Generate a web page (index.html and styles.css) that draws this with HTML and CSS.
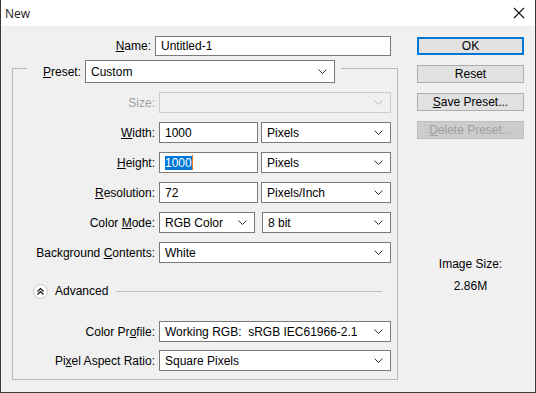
FILE: index.html
```html
<!DOCTYPE html>
<html lang="en">
<head>
    <meta charset="UTF-8">
    <title>New</title>
    <link rel="stylesheet" href="styles.css">
</head>
<body>
    <div class="window">
        <div class="titlebar">
            <span class="title">New</span>
            <svg class="close" width="12" height="12" viewBox="0 0 12 12">
                <path d="M1 1L11 11M11 1L1 11" stroke="#111" stroke-width="1.1" fill="none"/>
            </svg>
        </div>

        <div class="content">
            <div class="left">
                <div class="name-row">
                    <label class="name-label"><u>N</u>ame:</label>
                    <div class="field name-field">Untitled-1</div>
                </div>

                <div class="group">
                    <div class="group-head">
                        <label class="preset-label"><u>P</u>reset:</label>
                        <div class="field select preset-select">
                            <span>Custom</span>
                            <svg class="chev" width="9" height="5" viewBox="0 0 9 5"><polyline points="0.5,0.5 4.5,4.5 8.5,0.5" fill="none" stroke="#333"/></svg>
                        </div>
                    </div>

                    <div class="row first">
                        <label class="row-label disabled">Size:</label>
                        <div class="field select wide off">
                            <span></span>
                            <svg class="chev" width="9" height="5" viewBox="0 0 9 5"><polyline points="0.5,0.5 4.5,4.5 8.5,0.5" fill="none" stroke="#b5b5b5"/></svg>
                        </div>
                    </div>

                    <div class="row">
                        <label class="row-label"><u>W</u>idth:</label>
                        <div class="pair">
                            <div class="field num">1000</div>
                            <div class="field select unit">
                                <span>Pixels</span>
                                <svg class="chev" width="9" height="5" viewBox="0 0 9 5"><polyline points="0.5,0.5 4.5,4.5 8.5,0.5" fill="none" stroke="#333"/></svg>
                            </div>
                        </div>
                    </div>

                    <div class="row">
                        <label class="row-label"><u>H</u>eight:</label>
                        <div class="pair">
                            <div class="field num"><span class="selected">1000</span><span class="caret"></span></div>
                            <div class="field select unit">
                                <span>Pixels</span>
                                <svg class="chev" width="9" height="5" viewBox="0 0 9 5"><polyline points="0.5,0.5 4.5,4.5 8.5,0.5" fill="none" stroke="#333"/></svg>
                            </div>
                        </div>
                    </div>

                    <div class="row">
                        <label class="row-label"><u>R</u>esolution:</label>
                        <div class="pair">
                            <div class="field num">72</div>
                            <div class="field select unit">
                                <span>Pixels/Inch</span>
                                <svg class="chev" width="9" height="5" viewBox="0 0 9 5"><polyline points="0.5,0.5 4.5,4.5 8.5,0.5" fill="none" stroke="#333"/></svg>
                            </div>
                        </div>
                    </div>

                    <div class="row">
                        <label class="row-label">Color <u>M</u>ode:</label>
                        <div class="pair mode">
                            <div class="field select mode-select">
                                <span>RGB Color</span>
                                <svg class="chev" width="9" height="5" viewBox="0 0 9 5"><polyline points="0.5,0.5 4.5,4.5 8.5,0.5" fill="none" stroke="#333"/></svg>
                            </div>
                            <div class="field select unit">
                                <span>8 bit</span>
                                <svg class="chev" width="9" height="5" viewBox="0 0 9 5"><polyline points="0.5,0.5 4.5,4.5 8.5,0.5" fill="none" stroke="#333"/></svg>
                            </div>
                        </div>
                    </div>

                    <div class="row">
                        <label class="row-label">Background <u>C</u>ontents:</label>
                        <div class="field select wide">
                            <span>White</span>
                            <svg class="chev" width="9" height="5" viewBox="0 0 9 5"><polyline points="0.5,0.5 4.5,4.5 8.5,0.5" fill="none" stroke="#333"/></svg>
                        </div>
                    </div>

                    <div class="advanced">
                        <span class="adv-btn">
                            <svg width="15" height="15" viewBox="0 0 15 15">
                                <circle cx="7.5" cy="7.5" r="7" fill="#fff" stroke="#c8c8c8"/>
                                <polyline points="4.5,7.5 7.5,4.5 10.5,7.5" fill="none" stroke="#111" stroke-width="1.2"/>
                                <polyline points="4.5,10.5 7.5,7.5 10.5,10.5" fill="none" stroke="#111" stroke-width="1.2"/>
                            </svg>
                        </span>
                        <span class="adv-text">Advanced</span>
                        <span class="adv-line"></span>
                    </div>

                    <div class="row profile">
                        <label class="row-label">Color Pr<u>o</u>file:</label>
                        <div class="field select wide">
                            <span>Working RGB:&nbsp; sRGB IEC61966-2.1</span>
                            <svg class="chev" width="9" height="5" viewBox="0 0 9 5"><polyline points="0.5,0.5 4.5,4.5 8.5,0.5" fill="none" stroke="#333"/></svg>
                        </div>
                    </div>

                    <div class="row last">
                        <label class="row-label">Pi<u>x</u>el Aspect Ratio:</label>
                        <div class="field select wide">
                            <span>Square Pixels</span>
                            <svg class="chev" width="9" height="5" viewBox="0 0 9 5"><polyline points="0.5,0.5 4.5,4.5 8.5,0.5" fill="none" stroke="#333"/></svg>
                        </div>
                    </div>
                </div>
            </div>

            <div class="right">
                <button class="btn ok">OK</button>
                <button class="btn">Reset</button>
                <button class="btn"><u>S</u>ave Preset...</button>
                <button class="btn off"><u>D</u>elete Preset...</button>

                <div class="image-size">
                    <div>Image Size:</div>
                    <div class="size-value">2.86M</div>
                </div>
            </div>
        </div>
    </div>
</body>
</html>
```

FILE: styles.css
```css
body {
    margin: 0;
    font-family: "Liberation Sans", Arial, sans-serif;
    font-size: 12px;
    color: #000;
}

.window {
    width: 536px;
    height: 393px;
    box-sizing: border-box;
    border: 1px solid #3a3a3a;
    border-top: none;
    background-color: #f0f0f0;
    display: flex;
    flex-direction: column;
}

.titlebar {
    height: 26px;
    background-color: #fff;
    display: flex;
    align-items: center;
    justify-content: space-between;
    padding: 0 10px 0 4px;
}

.title {
    font-family: "Open Sans", sans-serif;
    font-size: 12px;
    color: #1a1a1a;
}

.close {
    display: block;
}

.content {
    display: flex;
    padding: 10px 11px 0 11px;
}

.left {
    width: 386px;
}

u {
    text-decoration: underline;
    text-underline-offset: 1px;
}

/* text boxes and drop downs */
.field {
    box-sizing: border-box;
    height: 21px;
    border: 1px solid #7a7a7a;
    background-color: #fff;
    display: flex;
    align-items: center;
    padding: 0 5px;
    white-space: nowrap;
}

.select {
    justify-content: space-between;
    padding-right: 7px;
}

.select.off {
    border-color: #cccccc;
    background-color: #f0f0f0;
}

.chev {
    display: block;
    flex-shrink: 0;
}

.name-row {
    display: flex;
    align-items: center;
}

.name-label {
    width: 139px;
    text-align: right;
    margin-right: 4px;
}

.name-field {
    width: 236px;
    height: 20px;
}

/* group box */
.group {
    margin-top: 12px;
    border: 1px solid #b9b9b9;
    padding: 0 6px 8px 0;
}

.group-head {
    display: flex;
    align-items: center;
    width: fit-content;
    margin: -9px 0 0 14px;
    padding: 0 6px 0 16px;
    background-color: #f0f0f0;
}

.preset-label {
    margin-right: 4px;
}

.preset-select {
    width: 250px;
    height: 23px;
}

.row {
    display: flex;
    align-items: center;
    margin-top: 9px;
}

.row-label {
    width: 142px;
    margin-right: 4px;
    text-align: right;
    flex-shrink: 0;
}

.row-label.disabled {
    color: #a0a0a0;
}

.wide {
    width: 232px;
}

.pair {
    display: flex;
    gap: 3px;
    width: 232px;
}

.num {
    width: 99px;
}

.unit {
    flex: 1;
}

.pair.mode {
    gap: 7px;
}

.mode-select {
    width: 96px;
}

.selected {
    background-color: #0078d7;
    color: #fff;
}

.caret {
    display: inline-block;
    width: 1px;
    height: 15px;
    background-color: #f07a1a;
}

.advanced {
    display: flex;
    align-items: center;
    margin: 20px 9px 0 20px;
    height: 16px;
}

.adv-btn svg {
    display: block;
}

.adv-text {
    margin-left: 7px;
    font-size: 12px;
}

.adv-line {
    flex: 1;
    height: 1px;
    margin-left: 8px;
    background-color: #c0c0c0;
}

.row.profile {
    margin-top: 22px;
}

.row.last {
    margin-top: 8px;
}

/* buttons on the right */
.right {
    margin-left: 19px;
    width: 107px;
    display: flex;
    flex-direction: column;
}

.btn {
    box-sizing: border-box;
    height: 18px;
    margin-top: 10px;
    border: 1px solid #adadad;
    background-color: #e1e1e1;
    font-family: inherit;
    font-size: 12px;
    color: #000;
    padding: 0;
}

.btn.ok {
    margin-top: 1px;
    border: 2px solid #0078d7;
}

.btn.off {
    background-color: #cccccc;
    border-color: #bfbfbf;
    color: #a0a0a0;
}

.image-size {
    margin-top: 118px;
    text-align: center;
    font-size: 12px;
}

.size-value {
    margin-top: 8px;
}
```
